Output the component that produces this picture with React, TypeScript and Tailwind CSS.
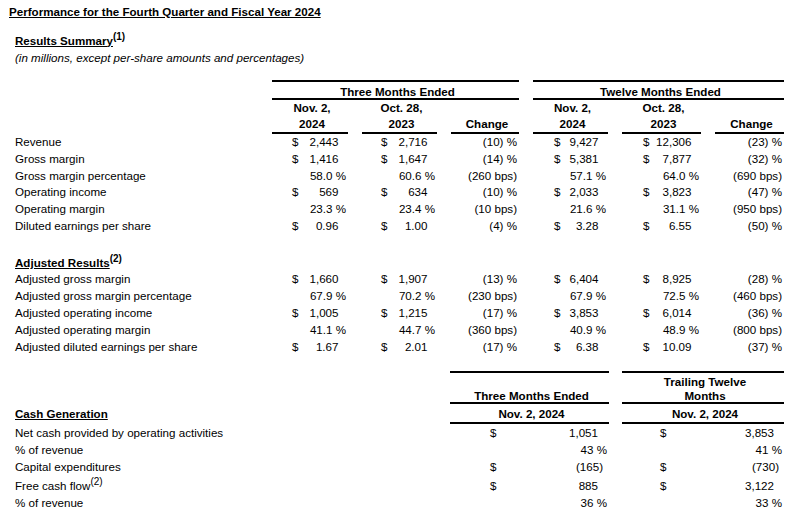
import React from "react";

type Cell = string | [string, string];

const ROW_GRID = "grid grid-cols-[243px_76px_75px_68px_75px_79px_69px] gap-x-[14px]";
const BOT_GRID = "grid grid-cols-[422px_159px_162px] gap-x-[13px]";
const DOLLAR_PL = ["pl-[20px]", "pl-[19px]", "", "pl-[21px]", "pl-[21px]", ""];

const topRows: Cell[][] = [
  ["Revenue", ["$", "2,443"], ["$", "2,716"], "(10) %", ["$", "9,427"], ["$", "12,306"], "(23) %"],
  ["Gross margin", ["$", "1,416"], ["$", "1,647"], "(14) %", ["$", "5,381"], ["$", "7,877"], "(32) %"],
  ["Gross margin percentage", "58.0 %", "60.6 %", "(260 bps)", "57.1 %", "64.0 %", "(690 bps)"],
  ["Operating income", ["$", "569"], ["$", "634"], "(10) %", ["$", "2,033"], ["$", "3,823"], "(47) %"],
  ["Operating margin", "23.3 %", "23.4 %", "(10 bps)", "21.6 %", "31.1 %", "(950 bps)"],
  ["Diluted earnings per share", ["$", "0.96"], ["$", "1.00"], "(4) %", ["$", "3.28"], ["$", "6.55"], "(50) %"],
];

const adjRows: Cell[][] = [
  ["Adjusted gross margin", ["$", "1,660"], ["$", "1,907"], "(13) %", ["$", "6,404"], ["$", "8,925"], "(28) %"],
  ["Adjusted gross margin percentage", "67.9 %", "70.2 %", "(230 bps)", "67.9 %", "72.5 %", "(460 bps)"],
  ["Adjusted operating income", ["$", "1,005"], ["$", "1,215"], "(17) %", ["$", "3,853"], ["$", "6,014"], "(36) %"],
  ["Adjusted operating margin", "41.1 %", "44.7 %", "(360 bps)", "40.9 %", "48.9 %", "(800 bps)"],
  ["Adjusted diluted earnings per share", ["$", "1.67"], ["$", "2.01"], "(17) %", ["$", "6.38"], ["$", "10.09"], "(37) %"],
];

function ValueCell({ cell, idx }: { cell: Cell; idx: number }) {
  if (idx === 2 || idx === 5) {
    return <div className="text-right pr-[2px] whitespace-nowrap">{cell as string}</div>;
  }
  if (Array.isArray(cell)) {
    return (
      <div className={`flex justify-between pr-[9.5px] ${DOLLAR_PL[idx]}`}>
        <span>{cell[0]}</span>
        <span>{cell[1]}</span>
      </div>
    );
  }
  return <div className="text-right pr-[2px] whitespace-nowrap">{cell}</div>;
}

function TopRow({ row }: { row: Cell[] }) {
  return (
    <div className={`${ROW_GRID} leading-[16.8px]`}>
      <div className="whitespace-nowrap">{row[0] as string}</div>
      {row.slice(1).map((c, i) => (
        <ValueCell key={i} cell={c} idx={i} />
      ))}
    </div>
  );
}

type BotCell = { d?: boolean; v: string; neg?: boolean };

function BotVal({ c, col }: { c: BotCell; col: number }) {
  if (c.d) {
    const cls =
      col === 0
        ? c.neg
          ? "flex justify-between pl-[40px] pr-[6px]"
          : "flex justify-between pl-[40px] pr-[11px]"
        : c.neg
        ? "flex justify-between pl-[38px] pr-[5px]"
        : "flex justify-between pl-[38px] pr-[10px]";
    return (
      <div className={cls}>
        <span>$</span>
        <span>{c.v}</span>
      </div>
    );
  }
  return <div className="text-right pr-[2px]">{c.v}</div>;
}

export default function App() {
  return (
    <div className="w-[796px] h-[518px] overflow-hidden bg-white text-black text-[11.6px] font-['Liberation_Sans',Arial,sans-serif] pt-[2.5px]">
      <div className="pl-[9px] leading-[17px] font-bold">
        <span className="underline">Performance for the Fourth Quarter and Fiscal Year 2024</span>
      </div>
      <div className="pl-[15px] mt-[12px] leading-[17px]">
        <span className="font-bold underline">Results Summary</span>
        <span className="relative -top-[4.5px] text-[10px] leading-none font-bold">(1)</span>
      </div>
      <div className="pl-[15px] leading-[17px] italic">
        (in millions, except per-share amounts and percentages)
      </div>

      <div className="pl-[15px] mt-[14px]">
        <div className={ROW_GRID}>
          <div />
          <div className="col-span-3 border-t-2 border-b-2 border-black text-center font-bold pt-[3px] leading-[13px] pl-[4px]">
            Three Months Ended
          </div>
          <div className="col-span-3 border-t-2 border-b-2 border-black text-center font-bold pt-[3px] leading-[13px] pl-[4px]">
            Twelve Months Ended
          </div>
        </div>
        <div className={ROW_GRID}>
          <div />
          <div className="border-b-2 border-black text-center font-bold leading-[16px] pl-[4px]">
            Nov. 2,
            <br />
            2024
          </div>
          <div className="border-b-2 border-black text-center font-bold leading-[16px] pl-[4px]">
            Oct. 28,
            <br />
            2023
          </div>
          <div className="border-b-2 border-black font-bold leading-[16px] pl-[4px] flex items-end justify-center">
            Change
          </div>
          <div className="border-b-2 border-black text-center font-bold leading-[16px] pl-[4px]">
            Nov. 2,
            <br />
            2024
          </div>
          <div className="border-b-2 border-black text-center font-bold leading-[16px] pl-[4px]">
            Oct. 28,
            <br />
            2023
          </div>
          <div className="border-b-2 border-black font-bold leading-[16px] pl-[4px] flex items-end justify-center">
            Change
          </div>
        </div>

        <div className="mt-[0.5px]">
          {topRows.map((r, i) => (
            <TopRow key={i} row={r} />
          ))}
        </div>
        <div className="h-[16.8px]" />
        <div className="pt-[3px] leading-[16.8px]">
          <span className="font-bold underline">Adjusted Results</span>
          <span className="relative -top-[5px] text-[10px] leading-none font-bold">(2)</span>
        </div>
        {adjRows.map((r, i) => (
          <TopRow key={i} row={r} />
        ))}

        <div className="mt-[16px]">
          <div className={BOT_GRID}>
            <div />
            <div className="border-t-2 border-b-2 border-black font-bold pt-[2px] leading-[13.5px] pl-[4px] flex items-end justify-center">
              Three Months Ended
            </div>
            <div className="border-t-2 border-b-2 border-black font-bold pt-[2px] leading-[13.5px] pl-[4px] text-center">
              Trailing Twelve
              <br />
              Months
            </div>
          </div>
          <div className={BOT_GRID}>
            <div className="pt-[3px] leading-[14.5px]">
              <span className="font-bold underline">Cash Generation</span>
            </div>
            <div className="border-b-2 border-black font-bold pt-[3px] leading-[14.5px] pl-[4px] text-center">
              Nov. 2, 2024
            </div>
            <div className="border-b-2 border-black font-bold pt-[3px] leading-[14.5px] pl-[4px] text-center">
              Nov. 2, 2024
            </div>
          </div>

          <div className={`${BOT_GRID} leading-[17px]`}>
            <div className="whitespace-nowrap">Net cash provided by operating activities</div>
            <BotVal c={{ d: true, v: "1,051" }} col={0} />
            <BotVal c={{ d: true, v: "3,853" }} col={1} />
          </div>
          <div className={`${BOT_GRID} leading-[17px]`}>
            <div>% of revenue</div>
            <BotVal c={{ v: "43 %" }} col={0} />
            <BotVal c={{ v: "41 %" }} col={1} />
          </div>
          <div className={`${BOT_GRID} leading-[17px]`}>
            <div>Capital expenditures</div>
            <BotVal c={{ d: true, v: "(165)", neg: true }} col={0} />
            <BotVal c={{ d: true, v: "(730)", neg: true }} col={1} />
          </div>
          <div className={`${BOT_GRID} leading-[17px] pt-[2.5px]`}>
            <div>
              Free cash flow
              <span className="relative -top-[5px] text-[10px] leading-none">(2)</span>
            </div>
            <BotVal c={{ d: true, v: "885" }} col={0} />
            <BotVal c={{ d: true, v: "3,122" }} col={1} />
          </div>
          <div className={`${BOT_GRID} leading-[17px]`}>
            <div>% of revenue</div>
            <BotVal c={{ v: "36 %" }} col={0} />
            <BotVal c={{ v: "33 %" }} col={1} />
          </div>
        </div>
      </div>
    </div>
  );
}
